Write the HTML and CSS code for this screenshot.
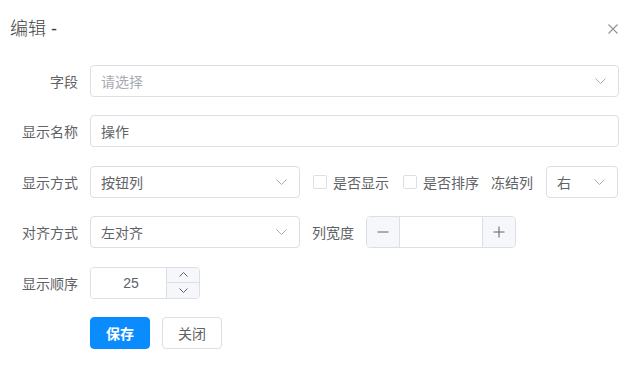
FILE: index.html
```html
<!DOCTYPE html>
<html lang="en">
  <head>
    <meta charset="UTF-8" />
    <meta name="viewport" content="width=device-width, initial-scale=1.0" />
    <title>编辑</title>
    <link rel="stylesheet" href="styles.css">
  </head>
  <body>
    <div class="dialog">
      <div class="dialog-header">
        <span class="dialog-title">编辑 -</span>
        <button class="dialog-close" type="button" aria-label="close">
          <svg width="10" height="10" viewBox="0 0 10 10">
            <path d="M0.5 0.5L9.5 9.5M9.5 0.5L0.5 9.5" stroke="#909399" stroke-width="1.1" fill="none" />
          </svg>
        </button>
      </div>

      <form class="form">
        <div class="form-row">
          <label class="form-label">字段</label>
          <div class="select grow">
            <span class="placeholder">请选择</span>
            <svg class="arrow" width="11" height="6" viewBox="0 0 11 6"><path d="M0.5 0.5L5.5 5.5L10.5 0.5" /></svg>
          </div>
        </div>

        <div class="form-row">
          <label class="form-label">显示名称</label>
          <input class="text-input grow" type="text" value="操作" />
        </div>

        <div class="form-row">
          <label class="form-label">显示方式</label>
          <div class="select half">
            <span>按钮列</span>
            <svg class="arrow" width="11" height="6" viewBox="0 0 11 6"><path d="M0.5 0.5L5.5 5.5L10.5 0.5" /></svg>
          </div>
          <label class="check first"><span class="check-box"></span>是否显示</label>
          <label class="check"><span class="check-box"></span>是否排序</label>
          <span class="inline-label freeze">冻结列</span>
          <div class="select tiny">
            <span>右</span>
            <svg class="arrow" width="11" height="6" viewBox="0 0 11 6"><path d="M0.5 0.5L5.5 5.5L10.5 0.5" /></svg>
          </div>
        </div>

        <div class="form-row">
          <label class="form-label">对齐方式</label>
          <div class="select half">
            <span>左对齐</span>
            <svg class="arrow" width="11" height="6" viewBox="0 0 11 6"><path d="M0.5 0.5L5.5 5.5L10.5 0.5" /></svg>
          </div>
          <span class="inline-label width-label">列宽度</span>
          <div class="number">
            <span class="number-btn minus">
              <svg width="12" height="12" viewBox="0 0 12 12"><path d="M0.5 6H11.5" /></svg>
            </span>
            <input class="number-value" type="text" value="" />
            <span class="number-btn plus">
              <svg width="12" height="12" viewBox="0 0 12 12"><path d="M0.5 6H11.5M6 0.5V11.5" /></svg>
            </span>
          </div>
        </div>

        <div class="form-row">
          <label class="form-label">显示顺序</label>
          <div class="spin">
            <input class="spin-value" type="text" value="25" />
            <div class="spin-controls">
              <span class="spin-btn">
                <svg width="9" height="5" viewBox="0 0 9 5"><path d="M0.5 4.5L4.5 0.5L8.5 4.5" /></svg>
              </span>
              <span class="spin-btn">
                <svg width="9" height="5" viewBox="0 0 9 5"><path d="M0.5 0.5L4.5 4.5L8.5 0.5" /></svg>
              </span>
            </div>
          </div>
        </div>

        <div class="form-row actions">
          <button class="btn btn-primary" type="button">保存</button>
          <button class="btn" type="button">关闭</button>
        </div>
      </form>
    </div>
  </body>
</html>
```

FILE: styles.css
```css
body {
  margin: 0;
  background: #fff;
  font-family: "Liberation Sans", "Noto Sans CJK SC", sans-serif;
  font-size: 14px;
  color: #606266;
}

.dialog {
  padding: 17px 10px 0 10px;
}

.dialog-header {
  display: flex;
  align-items: center;
  justify-content: space-between;
  height: 24px;
}

.dialog-title {
  font-size: 18px;
  line-height: 24px;
  color: #3e3f43;
  font-weight: 300;
}

.dialog-close {
  display: flex;
  padding: 0;
  margin-right: 1px;
  border: 0;
  background: none;
  cursor: pointer;
}

.form {
  margin-top: 24px;
}

.form-row {
  display: flex;
  align-items: center;
  height: 32px;
  margin-bottom: 18.4px;
}

.form-label {
  box-sizing: border-box;
  width: 80px;
  padding-right: 12px;
  text-align: right;
  flex-shrink: 0;
}

.actions {
  padding-left: 80px;
}

.grow {
  flex: 1;
}

.select,
.text-input {
  box-sizing: border-box;
  height: 32px;
  border: 1px solid #dcdfe6;
  border-radius: 4px;
  background: #fff;
  font-family: inherit;
  font-size: 14px;
  color: #606266;
}

.select {
  display: flex;
  align-items: center;
  justify-content: space-between;
  padding: 0 12px 0 10px;
}

.text-input {
  padding: 0 10px;
  outline: none;
}

.placeholder {
  color: #a8abb2;
}

.arrow path {
  fill: none;
  stroke: #a8abb2;
  stroke-width: 1;
}

.half {
  width: 210px;
}

.tiny {
  width: 72px;
  margin-left: 13px;
}

.check {
  display: flex;
  align-items: center;
  gap: 6px;
  margin-left: 14px;
}

.check.first {
  margin-left: 13px;
}

.check-box {
  box-sizing: border-box;
  width: 14px;
  height: 14px;
  border: 1px solid #dcdfe6;
  border-radius: 2px;
  background: #fff;
}

.freeze {
  margin-left: 12px;
}

.width-label {
  margin-left: 12px;
  margin-right: 12px;
}

.number {
  display: flex;
  box-sizing: border-box;
  width: 150px;
  height: 32px;
  border: 1px solid #dcdfe6;
  border-radius: 4px;
  overflow: hidden;
}

.number-btn {
  display: flex;
  align-items: center;
  justify-content: center;
  width: 32px;
  background: #f5f7fa;
}

.number-btn path,
.spin-btn path {
  fill: none;
  stroke: #606266;
  stroke-width: 1;
}

.minus {
  border-right: 1px solid #dcdfe6;
}

.plus {
  border-left: 1px solid #dcdfe6;
}

.number-value,
.spin-value {
  min-width: 0;
  flex: 1;
  border: 0;
  outline: none;
  padding: 0;
  font-family: inherit;
  font-size: 14px;
  color: #606266;
  text-align: center;
}

.spin-value {
  padding-left: 5px;
}

.spin {
  display: flex;
  box-sizing: border-box;
  width: 110px;
  height: 32px;
  border: 1px solid #dcdfe6;
  border-radius: 4px;
  overflow: hidden;
}

.spin-controls {
  display: flex;
  flex-direction: column;
  width: 32px;
  border-left: 1px solid #dcdfe6;
}

.spin-btn {
  display: flex;
  flex: 1;
  align-items: center;
  justify-content: center;
  background: #f5f7fa;
}

.spin-btn + .spin-btn {
  border-top: 1px solid #dcdfe6;
}

.btn {
  box-sizing: border-box;
  width: 60px;
  height: 32px;
  margin-right: 12px;
  border: 1px solid #dcdfe6;
  border-radius: 4px;
  background: #fff;
  font-family: inherit;
  font-size: 14px;
  color: #606266;
  cursor: pointer;
}

.btn-primary {
  border-color: #0a8cff;
  background: #0a8cff;
  color: #fff;
  font-weight: bold;
}
```
